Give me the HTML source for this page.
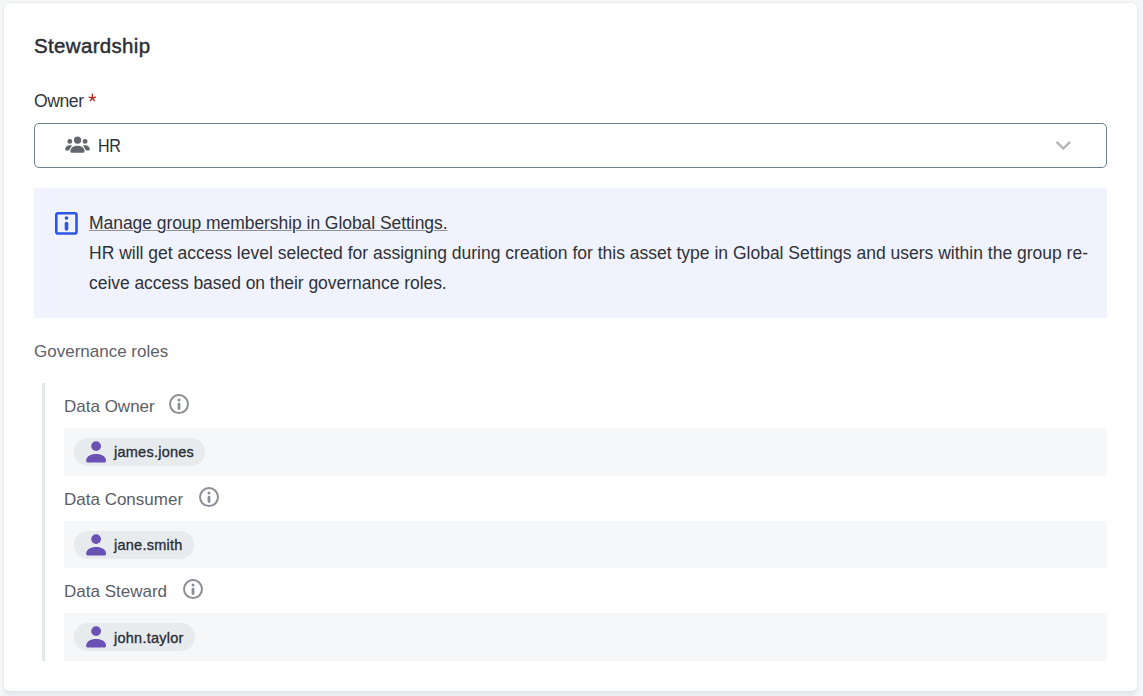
<!DOCTYPE html>
<html><head><meta charset="utf-8">
<style>
html,body{margin:0;padding:0;}
body{width:1143px;height:696px;overflow:hidden;background:#f4f6f8;font-family:"Liberation Sans",sans-serif;position:relative;}
.card{position:absolute;left:3px;top:2px;width:1133px;height:688px;background:#fff;border:1px solid #e8ecef;border-bottom-color:#dfe3e7;border-radius:6px;box-shadow:0 5px 5px -2px rgba(40,60,80,0.09);}
.abs{position:absolute;white-space:nowrap;line-height:1;}
#title{left:34px;top:35.6px;font-size:20.5px;font-weight:400;-webkit-text-stroke:0.45px #2b2e33;letter-spacing:0.33px;color:#2b2e33;}
#owner{left:34px;top:93px;font-size:17.6px;letter-spacing:-0.45px;color:#33363b;}
#owner .req{color:#b3261e;}
#dd{position:absolute;left:34px;top:123px;width:1071px;height:43px;border:1px solid #6f808e;border-radius:5px;background:#fff;}
#hr{left:98px;top:137.75px;font-size:17.5px;letter-spacing:-0.5px;transform:scaleX(0.92);transform-origin:0 0;color:#2d3035;}
#info{position:absolute;left:34px;top:188px;width:1073px;height:130px;background:#f0f3fd;}
.itext{font-size:17.5px;color:#2f3237;}
#l1{left:89px;top:214.75px;letter-spacing:-0.055px;text-decoration:underline;text-decoration-color:#8e9198;text-underline-offset:1px;text-decoration-thickness:1px;}
#l2{left:89px;top:244.75px;}
#l3{left:89px;top:274.6px;letter-spacing:-0.05px;}
#gov{left:34px;top:342.9px;font-size:17px;color:#5e6168;}
#vline{position:absolute;left:42px;top:383px;width:3px;height:278px;background:#e4e8ec;}
.lab{font-size:17px;color:#5b5e66;}
.box{position:absolute;left:64px;width:1043px;height:47.6px;background:#f6f7f9;}
.chip{position:absolute;left:10px;top:10px;height:28px;border-radius:14px;background:#e8ebee;}
.chip svg{position:absolute;left:12px;top:3px;}
.chip span{position:absolute;left:40px;top:7.4px;font-size:14.5px;font-weight:400;letter-spacing:0.25px;-webkit-text-stroke:0.33px #2a2d33;color:#2a2d33;white-space:nowrap;line-height:1;}
</style></head><body>
<div class="card"></div>
<div class="abs" id="title">Stewardship</div>
<div class="abs" id="owner">Owner</div>
<svg style="position:absolute;left:84px;top:90px" width="16" height="16" viewBox="84 90 16 16"><g stroke="#b8261c" stroke-width="1.3" stroke-linecap="butt" fill="none"><path d="M92.4 93.6 L92.4 98"/><path d="M88.6 97.2 L92.4 98 L96 97.2"/><path d="M90 101.1 L92.4 98 L94.8 101.1"/></g></svg>
<div id="dd"></div>
<svg style="position:absolute;left:63px;top:134px" width="30" height="22" viewBox="63 134 30 22">
  <g fill="#63646c">
    <circle cx="77.55" cy="140.2" r="3.6"/>
    <circle cx="69.8" cy="141.45" r="2.4"/>
    <circle cx="85.1" cy="141.45" r="2.4"/>
    <path d="M70.4 151.3 C70.4 147.8 73.4 145.7 77.45 145.7 C81.5 145.7 84.5 147.8 84.5 151.3 C84.5 152.5 84 152.8 83 152.8 L71.9 152.8 C70.9 152.8 70.4 152.5 70.4 151.3 Z"/>
    <path d="M72 145.2 L68.9 150.4 L66.6 150.4 C65.5 150.4 65 149.8 65.1 148.9 C65.5 146.6 67.3 145.2 69.6 145.2 Z"/>
    <path d="M82.9 145.2 L86 150.4 L88.3 150.4 C89.4 150.4 89.9 149.8 89.8 148.9 C89.4 146.6 87.6 145.2 85.3 145.2 Z"/>
  </g>
</svg>
<div class="abs" id="hr">HR</div>
<svg style="position:absolute;left:1055px;top:140px" width="17" height="11" viewBox="0 0 17 11">
  <path d="M1.6 1.9 L8.3 8.6 L15 1.9" fill="none" stroke="#b4b5bb" stroke-width="2.4"/>
</svg>
<div id="info"></div>
<svg style="position:absolute;left:55px;top:212px" width="23" height="23" viewBox="0 0 23 23">
  <rect x="1.3" y="1.3" width="20.2" height="20.2" rx="1.8" fill="none" stroke="#2d55e8" stroke-width="2.6"/>
  <circle cx="11.5" cy="6.1" r="1.8" fill="#2d55e8"/>
  <path d="M11.5 11.5 L11.5 17" stroke="#2d55e8" stroke-width="3.6" stroke-linecap="round"/>
</svg>
<div class="abs itext" id="l1">Manage group membership in Global Settings.</div>
<div class="abs itext" id="l2">HR will get access level selected for assigning during creation for this asset type in Global Settings and users within the group re-</div>
<div class="abs itext" id="l3">ceive access based on their governance roles.</div>
<div class="abs" id="gov">Governance roles</div>
<div id="vline"></div>

<div class="abs lab" id="lab1" style="left:64px;top:397.8px">Data Owner</div>
<svg style="position:absolute;left:168px;top:393px" width="22" height="22" viewBox="0 0 22 22"><circle cx="11" cy="11.1" r="9.0" fill="none" stroke="#8d8e95" stroke-width="2"/><circle cx="11" cy="7" r="1.5" fill="#8d8e95"/><path d="M11 11.2 L11 15.6" stroke="#8d8e95" stroke-width="2.8" stroke-linecap="round"/></svg>
<div class="box" style="top:428px"><div class="chip" style="width:131px">
<svg width="22" height="22" viewBox="0 0 22 22"><circle cx="10.1" cy="5.1" r="4.9" fill="#6a51b4"/><path d="M0.2 19.2 C0.4 15.3 4.6 12.9 10.1 12.9 C15.6 12.9 19.8 15.3 20 19.2 C20 21.2 19.2 21.5 17.5 21.5 L2.7 21.5 C1 21.5 0.2 21.2 0.2 19.2 Z" fill="#6a51b4"/></svg>
<span>james.jones</span></div></div>

<div class="abs lab" id="lab2" style="left:64px;top:490.9px">Data Consumer</div>
<svg style="position:absolute;left:198px;top:486px" width="22" height="22" viewBox="0 0 22 22"><circle cx="11" cy="11.1" r="9.0" fill="none" stroke="#8d8e95" stroke-width="2"/><circle cx="11" cy="7" r="1.5" fill="#8d8e95"/><path d="M11 11.2 L11 15.6" stroke="#8d8e95" stroke-width="2.8" stroke-linecap="round"/></svg>
<div class="box" style="top:520.6px"><div class="chip" style="width:120px">
<svg width="22" height="22" viewBox="0 0 22 22"><circle cx="10.1" cy="5.1" r="4.9" fill="#6a51b4"/><path d="M0.2 19.2 C0.4 15.3 4.6 12.9 10.1 12.9 C15.6 12.9 19.8 15.3 20 19.2 C20 21.2 19.2 21.5 17.5 21.5 L2.7 21.5 C1 21.5 0.2 21.2 0.2 19.2 Z" fill="#6a51b4"/></svg>
<span>jane.smith</span></div></div>

<div class="abs lab" id="lab3" style="left:64px;top:582.9px">Data Steward</div>
<svg style="position:absolute;left:182px;top:578px" width="22" height="22" viewBox="0 0 22 22"><circle cx="11" cy="11.1" r="9.0" fill="none" stroke="#8d8e95" stroke-width="2"/><circle cx="11" cy="7" r="1.5" fill="#8d8e95"/><path d="M11 11.2 L11 15.6" stroke="#8d8e95" stroke-width="2.8" stroke-linecap="round"/></svg>
<div class="box" style="top:613.2px"><div class="chip" style="width:121px">
<svg width="22" height="22" viewBox="0 0 22 22"><circle cx="10.1" cy="5.1" r="4.9" fill="#6a51b4"/><path d="M0.2 19.2 C0.4 15.3 4.6 12.9 10.1 12.9 C15.6 12.9 19.8 15.3 20 19.2 C20 21.2 19.2 21.5 17.5 21.5 L2.7 21.5 C1 21.5 0.2 21.2 0.2 19.2 Z" fill="#6a51b4"/></svg>
<span>john.taylor</span></div></div>
</body></html>
